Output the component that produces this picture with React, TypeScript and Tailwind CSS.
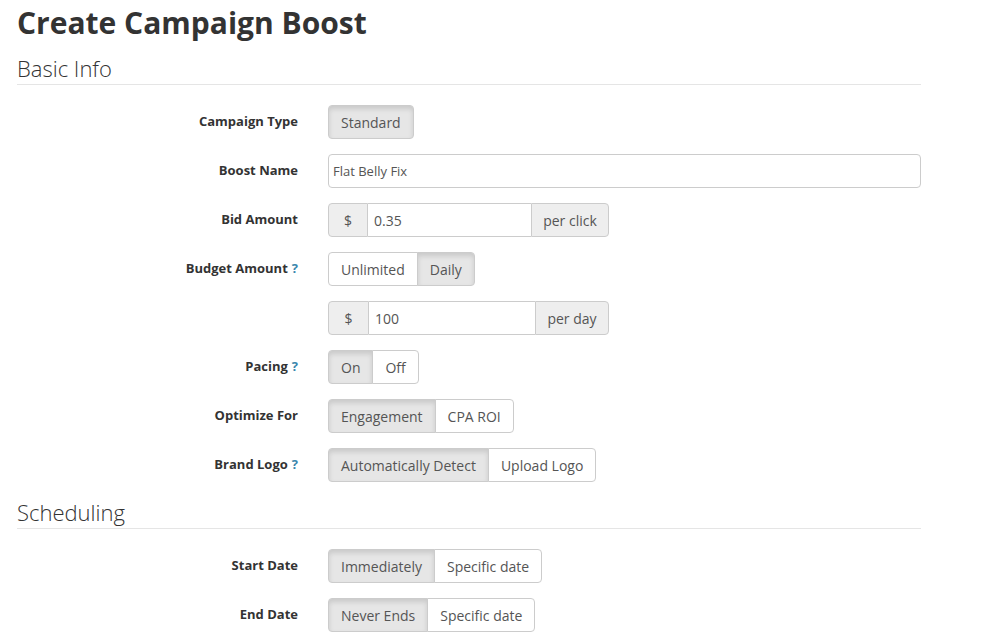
import React from "react";

const font = { fontFamily: '"Open Sans", "Liberation Sans", sans-serif' };

function Help() {
  return <span className="ml-1 font-bold text-[#3a87ad]">?</span>;
}

function Row({ label, help, children }: { label?: string; help?: boolean; children: React.ReactNode }) {
  return (
    <div className="flex items-center h-[34px] mb-[15px]">
      <label className="w-[281px] text-right text-[13px] font-bold text-[#333]">
        {label}
        {help && <Help />}
      </label>
      <div className="ml-[30px] flex">{children}</div>
    </div>
  );
}

function Toggle({ options, active }: { options: string[]; active: number }) {
  return (
    <div className="flex">
      {options.map((o, i) => (
        <button
          key={o}
          className={
            "h-[34px] px-3 text-[14px] text-[#555] border border-[#ccc] " +
            (i === 0 ? "rounded-l " : "-ml-px ") +
            (i === options.length - 1 ? "rounded-r " : "") +
            (i === active ? "bg-[#e6e6e6] shadow-[inset_0_3px_5px_rgba(0,0,0,0.125)] border-[#adadad]" : "bg-white")
          }
        >
          {o}
        </button>
      ))}
    </div>
  );
}

function Addon({ value, suffix, inputW, suffixW, prefixW }: { value: string; suffix: string; inputW: string; suffixW: string; prefixW: string }) {
  return (
    <div className="flex h-[34px] text-[14px] text-[#555]">
      <span className={"flex items-center justify-center rounded-l border border-[#ccc] bg-[#eee] " + prefixW}>$</span>
      <input
        readOnly
        value={value}
        className={"h-full border-y border-[#ccc] bg-white px-[6px] outline-none " + inputW}
      />
      <span className={"flex items-center justify-center rounded-r border border-[#ccc] bg-[#eee] " + suffixW}>{suffix}</span>
    </div>
  );
}

function Section({ title }: { title: string }) {
  return (
    <div className="border-b border-[#e5e5e5] w-[904px] mb-[20px]">
      <h2 className="text-[22px] font-light text-[#333] leading-[30px] pb-[1px]">{title}</h2>
    </div>
  );
}

export default function App() {
  return (
    <div style={font} className="bg-white min-h-[643px] pl-[17px] pt-[3px] text-[#333]">
      <h1 className="text-[30px] font-bold leading-[40px] text-[#333] mb-[10px]">Create Campaign Boost</h1>
      <Section title="Basic Info" />
      <Row label="Campaign Type">
        <Toggle options={["Standard"]} active={0} />
      </Row>
      <Row label="Boost Name">
        <input
          readOnly
          value="Flat Belly Fix"
          className="h-[34px] w-[593px] rounded border border-[#ccc] px-[4px] text-[13px] text-[#555] outline-none"
        />
      </Row>
      <Row label="Bid Amount">
        <Addon value="0.35" suffix="per click" prefixW="w-[40px]" inputW="w-[163px]" suffixW="w-[78px]" />
      </Row>
      <Row label="Budget Amount" help>
        <Toggle options={["Unlimited", "Daily"]} active={1} />
      </Row>
      <Row>
        <Addon value="100" suffix="per day" prefixW="w-[41px]" inputW="w-[166px]" suffixW="w-[74px]" />
      </Row>
      <Row label="Pacing" help>
        <Toggle options={["On", "Off"]} active={0} />
      </Row>
      <Row label="Optimize For">
        <Toggle options={["Engagement", "CPA ROI"]} active={0} />
      </Row>
      <Row label="Brand Logo" help>
        <Toggle options={["Automatically Detect", "Upload Logo"]} active={0} />
      </Row>
      <Section title="Scheduling" />
      <Row label="Start Date">
        <Toggle options={["Immediately", "Specific date"]} active={0} />
      </Row>
      <Row label="End Date">
        <Toggle options={["Never Ends", "Specific date"]} active={0} />
      </Row>
    </div>
  );
}
